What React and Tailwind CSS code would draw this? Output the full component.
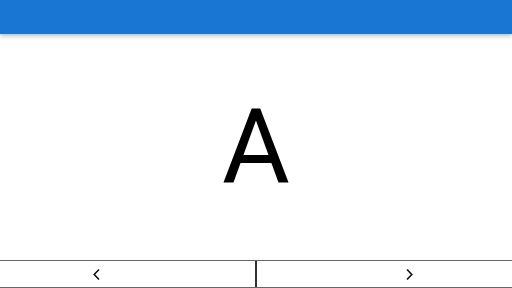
export default function App() {
  return (
    <div className="w-[512px] h-[288px] flex flex-col bg-white overflow-hidden" style={{ fontFamily: "Roboto, 'Liberation Sans', sans-serif" }}>
      <div className="h-[34px] shrink-0 bg-[#1976d2] shadow-[0_2px_4px_rgba(0,0,0,0.25)] relative z-10" />
      <div className="flex-1 flex items-center justify-center">
        <span className="text-[104px] leading-none text-black">A</span>
      </div>
      <div className="h-[28px] shrink-0 grid grid-cols-2 border-t border-b border-[#666]">
        <button className="flex items-center justify-start pl-[92px] border-r border-[#333] bg-white">
          <svg width="9" height="13" viewBox="0 0 9 13" fill="none" stroke="#111" strokeWidth="1.6">
            <path d="M7 1.5 L2.2 6.5 L7 11.5" />
          </svg>
        </button>
        <button className="flex items-center justify-start pl-[148px] border-l border-[#333] bg-white">
          <svg width="9" height="13" viewBox="0 0 9 13" fill="none" stroke="#111" strokeWidth="1.6">
            <path d="M2 1.5 L6.8 6.5 L2 11.5" />
          </svg>
        </button>
      </div>
    </div>
  );
}
